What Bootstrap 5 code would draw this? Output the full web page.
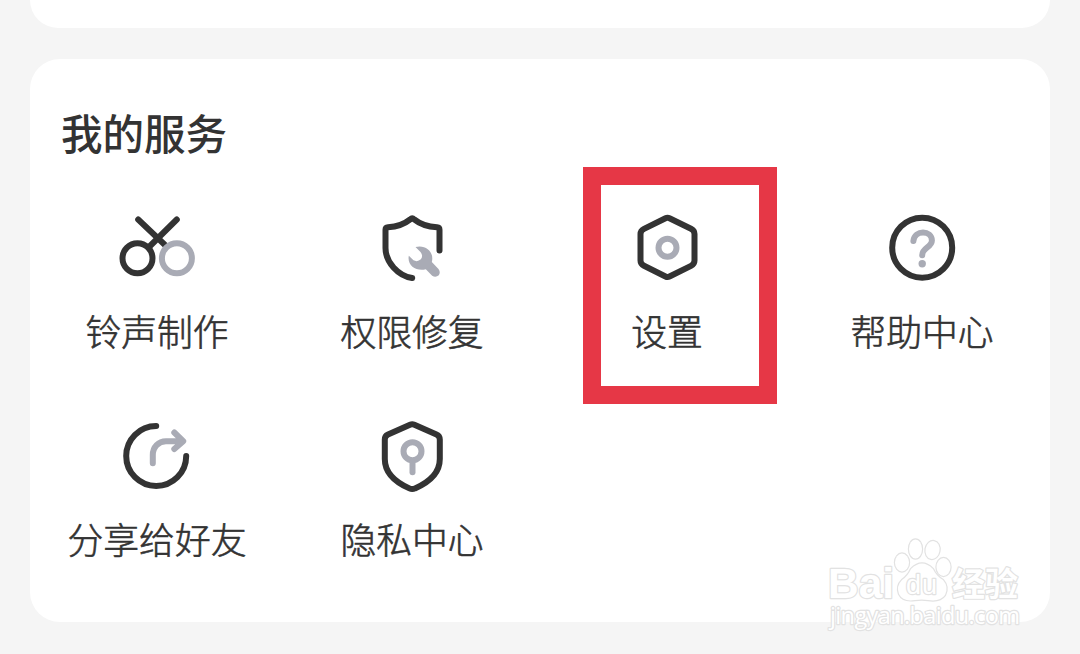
<!DOCTYPE html>
<html lang="zh-CN">

<head>
    <meta charset="UTF-8" />
    <meta name="viewport" content="width=device-width, initial-scale=1" />
    <title>我的服务</title>
    <link rel="stylesheet" href="https://cdn.jsdelivr.net/npm/bootstrap@5.3.0/dist/css/bootstrap.min.css">
    <style>
        body {
            background: #f5f5f5;
            color: #333;
            font-family: "Noto Sans CJK SC", sans-serif;
            height: 654px;
            overflow: hidden;
        }

        .page {
            width: 1080px;
            padding: 0 30px;
        }

        .panel-prev {
            height: 28px;
            border-radius: 0 0 30px 30px;
        }

        .panel-service {
            height: 563px;
            margin-top: 31px;
            padding-top: 43px;
            border-radius: 30px;
        }

        .service-title {
            font-size: 41.5px;
            font-weight: 500;
            line-height: 60px;
            padding-left: 31px;
            margin-bottom: 3px;
        }

        .tile {
            height: 208px;
            padding-top: 38px;
        }

        .tile svg {
            width: 120px;
            height: 90px;
            fill: none;
            stroke: #333;
            stroke-width: 6;
            stroke-linecap: round;
            stroke-linejoin: round;
        }

        .tile .soft {
            stroke: #a9abb5;
        }

        .tile .soft-fill {
            fill: #a9abb5;
            stroke: none;
        }

        .tile-label {
            font-size: 35.8px;
            font-weight: 300;
            line-height: 54px;
            margin-top: 10px;
            padding-right: 1px;
            -webkit-text-stroke: .6px #333;
        }

        /* red frame around the settings entry */
        .highlight {
            left: 43px;
            top: 2px;
            width: 194px;
            height: 237px;
            border: 18px solid #e63746;
        }

        .watermark {
            left: 810px;
            top: 530px;
            fill: #fff;
            stroke: #e2e2e2;
            stroke-width: 2.4;
            stroke-linejoin: round;
            paint-order: stroke;
        }
    </style>
</head>

<body>
    <main class="page position-relative">
        <div class="panel-prev bg-white"></div>
        <section class="panel-service bg-white">
            <h1 class="service-title">我的服务</h1>
            <div class="row g-0 row-cols-4">
                <div class="col tile d-flex flex-column align-items-center">
                    <svg viewBox="-60 -45 120 90">
                        <path d="M-19.8 -28.5L7 -3M18.8 -28.5L-9 -1" />
                        <circle cx="-20.5" cy="10.3" r="15" />
                        <circle class="soft" cx="18.9" cy="10.3" r="15" />
                    </svg>
                    <div class="tile-label">铃声制作</div>
                </div>
                <div class="col tile d-flex flex-column align-items-center">
                    <svg viewBox="-60 -45 120 90">
                        <path d="M26.5 2.5V-18.3Q26.5 -20.5 24 -20.7Q10 -21.5 1.2 -28.6Q-.8 -30.5 -2.8 -28.6Q-11.5 -21.5 -25 -20.7Q-27.5 -20.5 -27.5 -18.3V0C-27.5 14 -15 28 -.8 30" />
                        <path class="soft-fill" transform="translate(-52.5 -48) scale(.3333)"
                            d="M165 141C195 133 222 155 214 186L234 207Q241 216 235 226Q225 234 215 227L196 208C167 215 139 197 145 167L159 181Q171 187 181 178Q189 167 180 156Z" />
                    </svg>
                    <div class="tile-label">权限修复</div>
                </div>
                <div class="col tile d-flex flex-column align-items-center position-relative">
                    <svg viewBox="-60 -45 120 90">
                        <path d="M-2.5 -29.7Q-.5 -30.7 1.5 -29.7L23 -19.2Q26.5 -17.4 26.5 -14V12.5Q26.5 16 23 17.8L1.5 28.5Q-.5 29.5 -2.5 28.5L-24 17.8Q-27.5 16 -27.5 12.5V-14Q-27.5 -17.4 -24 -19.2Z" />
                        <circle class="soft" cx="-.5" cy="-.3" r="9" />
                    </svg>
                    <div class="tile-label">设置</div>
                    <div class="highlight position-absolute"></div>
                </div>
                <div class="col tile d-flex flex-column align-items-center">
                    <svg viewBox="-60 -45 120 90">
                        <circle cx="-.8" cy="-.3" r="30" />
                        <path class="soft" d="M-9.6 -7C-8.5 -18.5 8.9 -18 8.9 -7.4C8.9 -.5 -.8 -.5 -.8 7.2" />
                        <circle class="soft-fill" cx="-.8" cy="15.7" r="3.7" />
                    </svg>
                    <div class="tile-label">帮助中心</div>
                </div>
                <div class="col tile d-flex flex-column align-items-center">
                    <svg viewBox="-60 -45 120 90">
                        <path d="M-1.8 -30A30 30 0 1 0 28.2 0" />
                        <path class="soft" d="M-5.2 7.3V-1C-5.2 -9 .5 -14.8 8 -14.8H24M16.3 -23.5L25.2 -14.8L16.3 -6.9" />
                    </svg>
                    <div class="tile-label">分享给好友</div>
                </div>
                <div class="col tile d-flex flex-column align-items-center">
                    <svg viewBox="-60 -45 120 90">
                        <path d="M-3 -31.2Q-.8 -32.2 1.4 -31.2L23.5 -21.5Q26.8 -20 26.8 -16.5V3C26.8 17 15.5 26.5 2 32.4Q-.8 33.7 -3.6 32.4C-17 26.5 -28.2 17 -28.2 3V-16.5Q-28.2 -20 -25 -21.5Z" />
                        <circle class="soft" cx="-.5" cy="-4.7" r="9" />
                        <path class="soft" d="M-.5 6V16.3" />
                    </svg>
                    <div class="tile-label">隐私中心</div>
                </div>
            </div>
        </section>

        <svg class="watermark position-absolute" width="270" height="124" viewBox="0 0 270 124">
            <g font-family="Liberation Sans, sans-serif" font-weight="700">
                <text x="18" y="68" font-size="43" textLength="66" lengthAdjust="spacingAndGlyphs">Bai</text>
                <ellipse cx="92" cy="32.5" rx="7" ry="9" />
                <ellipse cx="105.500" cy="19" rx="6.500" ry="9.500" />
                <ellipse cx="122.500" cy="20" rx="7" ry="9" transform="rotate(10 122.500 20)" />
                <ellipse cx="133.500" cy="37" rx="7" ry="9" />
                <path d="M101 39Q112 28 123 39Q126 46 133 50Q139 57 135 65Q130 72 118 70Q112 69 105 70Q93 72 89 64Q86 56 92 50Q98 46 101 39Z" />
                <text x="96" y="64" font-size="27" font-weight="400" textLength="31">du</text>
            </g>
            <text x="142" y="66" font-family="Noto Sans CJK SC, sans-serif" font-weight="700" font-size="33">经验</text>
            <text x="20" y="94" font-family="Open Sans, sans-serif" font-size="23.500" textLength="190">jingyan.baidu.com</text>
        </svg>
    </main>
    <script src="https://cdn.jsdelivr.net/npm/bootstrap@5.3.0/dist/js/bootstrap.bundle.min.js"></script>
</body>

</html>
